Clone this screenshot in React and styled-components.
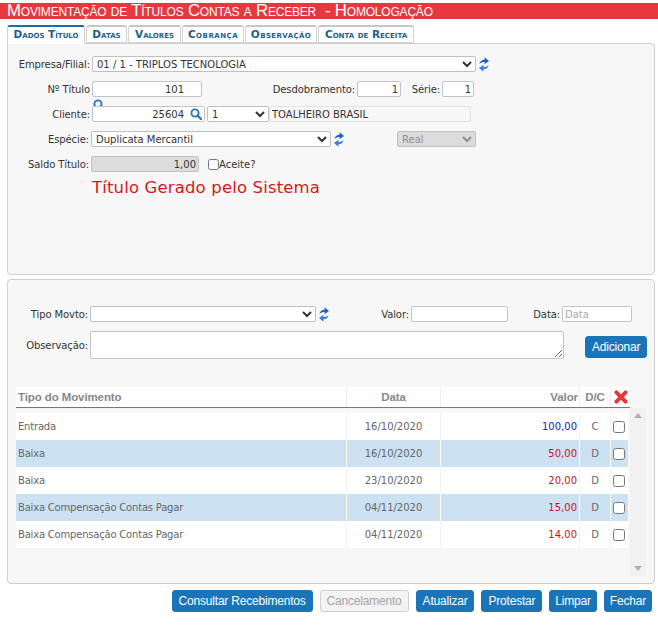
import React from "react"
import styled, { createGlobalStyle } from "styled-components"

const Global = createGlobalStyle`
  html, body {
    margin: 0;
    padding: 0;
    background: #fff;
  }
  body {
    width: 658px;
    height: 630px;
    overflow: hidden;
    font-family: "DejaVu Sans", Verdana, sans-serif;
    font-size: 10px;
    color: #333;
  }
`

const Page = styled.div`
  display: flex;
  flex-direction: column;
  padding-top: 3px;
`

const TitleBar = styled.div`
  height: 16px;
  background: #e8373f;
  color: #fff;
  font-family: "Liberation Sans", Arial, sans-serif;
  font-size: 16.8px;
  font-variant: small-caps;
  letter-spacing: -0.2px;
  line-height: 16px;
  padding-left: 7px;
  white-space: pre;
`

const Tabs = styled.div`
  display: flex;
  gap: 1px;
  margin: 6px 0 0 7px;
  height: 18px;
  position: relative;
  z-index: 1;
`

const Tab = styled.div`
  width: ${(p) => p.$w}px;
  height: ${(p) => (p.$active ? "19px" : "18px")};
  box-sizing: border-box;
  background: #fff;
  border: 1px solid #d4d4d4;
  border-top: 2px solid ${(p) => (p.$active ? "#1a6ea8" : "#c6c6c6")};
  border-bottom: ${(p) => (p.$active ? "none" : "1px solid #d4d4d4")};
  border-radius: 3px 3px 0 0;
  color: #1d5f8a;
  font-family: "DejaVu Sans", Verdana, sans-serif;
  font-size: 10.5px;
  font-weight: bold;
  font-variant: small-caps;
  letter-spacing: ${(p) => p.$ls || 0}px;
  line-height: 15px;
  text-align: center;
  white-space: nowrap;
`

const Panel = styled.div`
  margin: 0 3px 0 7px;
  box-sizing: border-box;
  height: ${(p) => p.$height}px;
  background: #f7f7f7;
  border: 1px solid #cfcfcf;
  border-radius: ${(p) => (p.$flat ? "0 4px 4px 4px" : "4px")};
  margin-top: ${(p) => p.$top || 0}px;
  padding-top: ${(p) => p.$pad}px;
  position: relative;
`

const Row = styled.div`
  display: flex;
  align-items: center;
  height: 16px;
  margin-bottom: ${(p) => p.$after}px;
`

const Label = styled.label`
  width: ${(p) => p.$w}px;
  flex: none;
  text-align: right;
  padding-right: 2px;
  box-sizing: border-box;
  white-space: nowrap;
  letter-spacing: -0.1px;
`

const Input = styled.input`
  width: ${(p) => p.$w}px;
  height: 16px;
  flex: none;
  box-sizing: border-box;
  margin: 0;
  padding: 0 ${(p) => p.$pr || 2}px 0 2px;
  border: 1px solid ${(p) => (p.$soft ? "#e3e3e3" : "#c4c4c4")};
  border-radius: 2px;
  background: ${(p) => (p.$bg ? p.$bg : "#fff")};
  color: #333;
  font: 10px "DejaVu Sans", Verdana, sans-serif;
  text-align: ${(p) => (p.$textLeft ? "left" : "right")};
  &::placeholder {
    color: #aaa;
  }
`

const Select = styled.select`
  width: ${(p) => p.$w}px;
  height: 16px;
  flex: none;
  box-sizing: border-box;
  margin: 0 0 0 ${(p) => p.$left || 0}px;
  padding: 0;
  border: 1px solid #c0c0c0;
  border-radius: 2px;
  background: ${(p) => (p.disabled ? "#dcdcdc" : "#fff")};
  color: ${(p) => (p.disabled ? "#8c8c8c" : "#333")};
  opacity: 1;
  font: 10px "DejaVu Sans", Verdana, sans-serif;
`

const SearchWrap = styled.span`
  position: relative;
  display: block;
  width: 113px;
  height: 16px;
  flex: none;
`

const InnerSearch = styled.svg`
  position: absolute;
  right: 3px;
  top: 2px;
  width: 12px;
  height: 12px;
`

const StraySearch = styled.svg`
  position: absolute;
  left: 1px;
  top: -7px;
  width: 12px;
  height: 7px;
`

const RefreshSvg = styled.svg`
  width: 10px;
  height: 15px;
  flex: none;
  margin-left: 3px;
`

const Refresh = () => (
  <RefreshSvg viewBox="0 0 10 15">
    <path d="M.4 7C.8 4.2 2.8 2.8 5.6 2.7V.3L10 3.9 5.6 7.3V5C3.6 5 1.8 5.6.4 7Z" fill="#1f5fc4" />
    <path d="M9.6 8C9.2 10.8 7.2 12.2 4.4 12.3V14.7L0 11.1 4.4 7.7V10C6.4 10 8.2 9.4 9.6 8Z" fill="#3a7fdc" />
  </RefreshSvg>
)

const CheckInline = styled.input`
  width: 11px;
  height: 11px;
  margin: 0 0 0 9px;
  flex: none;
`

const SystemMsg = styled.div`
  margin-left: 84px;
  color: #d81818;
  font-family: "DejaVu Sans", Verdana, sans-serif;
  font-size: 16.5px;
  line-height: 20px;
  letter-spacing: 0.15px;
`

const TextArea = styled.textarea`
  width: 474px;
  height: 28px;
  flex: none;
  box-sizing: border-box;
  margin: 0;
  border: 1px solid #c4c4c4;
  border-radius: 2px;
  background: #fff;
`

const ObsRow = styled.div`
  display: flex;
  align-items: center;
  height: 28px;
  margin-bottom: 28px;
`

const Button = styled.button`
  height: 22px;
  box-sizing: border-box;
  margin: 0;
  padding: 0 ${(p) => p.$px || 6}px;
  border: 1px solid ${(p) => (p.disabled ? "#cfcfcf" : "#1a75b8")};
  border-radius: 3px;
  background: ${(p) => (p.disabled ? "#f3f3f3" : "#1a75b8")};
  color: ${(p) => (p.disabled ? "#a5a5a5" : "#fff")};
  font-family: "Liberation Sans", Arial, sans-serif;
  font-size: 12px;
  letter-spacing: -0.2px;
  white-space: nowrap;
`

const AddButton = styled(Button)`
  margin: 4px 0 0 21px;
`

const TableWrap = styled.div`
  margin-left: 8px;
  width: 630px;
`

const HeadRow = styled.div`
  display: grid;
  grid-template-columns: 331px 94px 139px 31px 19px;
  height: 21px;
  background: #fff;
  border-bottom: 1px solid #777;
  box-sizing: border-box;
  width: 614px;
`

const HeadCell = styled.div`
  display: flex;
  align-items: center;
  justify-content: ${(p) => p.$align || "flex-start"};
  padding: 0 ${(p) => (p.$align === "flex-end" ? 1 : p.$align ? 0 : 2)}px;
  border-right: ${(p) => (p.$last ? "none" : "1px solid #eee")};
  color: #888;
  font-family: "Liberation Sans", Arial, sans-serif;
  font-size: 11.5px;
  font-weight: bold;
  letter-spacing: -0.1px;
  white-space: nowrap;
`

const TableBody = styled.div`
  display: flex;
  height: 168px;
`

const Rows = styled.div`
  width: 612px;
  padding-top: 5px;
  box-sizing: border-box;
`

const DataRow = styled.div`
  display: grid;
  grid-template-columns: 331px 94px 139px 31px 17px;
  height: 27px;
  background: ${(p) => (p.$alt ? "#cce2f3" : "#fff")};
`

const Cell = styled.div`
  display: flex;
  align-items: center;
  justify-content: ${(p) => p.$align || "flex-start"};
  padding: 0 ${(p) => (p.$align === "flex-end" ? 2 : p.$align ? 0 : 2)}px;
  border-right: ${(p) => (p.$last ? "none" : `1px solid ${p.$alt ? "#fff" : "#f2f2f2"}`)};
  color: ${(p) => p.$color || "#666"};
  letter-spacing: ${(p) => (p.$tight ? "-0.2px" : "0")};
  white-space: nowrap;
`

const RowCheck = styled.input`
  width: 12px;
  height: 12px;
  margin: 0 2px 0 0;
`

const Scrollbar = styled.div`
  width: 16px;
  margin-left: 2px;
  background: #f1f1f1;
  display: flex;
  flex-direction: column;
  justify-content: space-between;
  align-items: center;
  padding: 5px 0;
  box-sizing: border-box;
`

const Arrow = styled.div`
  width: 0;
  height: 0;
  border-left: 4px solid transparent;
  border-right: 4px solid transparent;
  border-${(p) => (p.$up ? "bottom" : "top")}: 5px solid #b0b0b0;
`

const Footer = styled.div`
  display: flex;
  justify-content: flex-end;
  gap: 7px;
  margin: 6px 6px 0 0;
`

const CloseIcon = styled.svg`
  width: 14px;
  height: 14px;
`

const Magnifier = () => (
  <>
    <circle cx="5" cy="5" r="3.6" fill="none" stroke="#2a7ab0" strokeWidth="1.9" />
    <path d="M7.6 7.6 11 11" stroke="#2a7ab0" strokeWidth="2.4" strokeLinecap="round" />
  </>
)

const movements = [
  { tipo: "Entrada", data: "16/10/2020", valor: "100,00", dc: "C", color: "#2020c0" },
  { tipo: "Baixa", data: "16/10/2020", valor: "50,00", dc: "D", color: "#d01020" },
  { tipo: "Baixa", data: "23/10/2020", valor: "20,00", dc: "D", color: "#d01020" },
  { tipo: "Baixa Compensação Contas Pagar", data: "04/11/2020", valor: "15,00", dc: "D", color: "#d01020" },
  { tipo: "Baixa Compensação Contas Pagar", data: "04/11/2020", valor: "14,00", dc: "D", color: "#d01020" },
]

const App = () => (
  <Page>
    <Global />
    <TitleBar>Movimentação de Títulos Contas a Receber  - Homologação</TitleBar>
    <Tabs>
      <Tab $active $w={78}>Dados Título</Tab>
      <Tab $w={41}>Datas</Tab>
      <Tab $w={53}>Valores</Tab>
      <Tab $w={62} $ls={0.5}>Cobrança</Tab>
      <Tab $w={72} $ls={0.4}>Observação</Tab>
      <Tab $w={96}>Conta de Receita</Tab>
    </Tabs>
    <Panel $height={232} $flat $pad={12}>
      <Row $after={9}>
        <Label $w={84}>Empresa/Filial:</Label>
        <Select $w={384} defaultValue="a">
          <option value="a">01 / 1 - TRIPLOS TECNOLOGIA</option>
        </Select>
        <Refresh />
      </Row>
      <Row $after={9}>
        <Label $w={84}>Nº Título</Label>
        <Input $w={110} $pr={17} defaultValue="101" />
        <Label $w={155}>Desdobramento:</Label>
        <Input $w={44} defaultValue="1" />
        <Label $w={41}>Série:</Label>
        <Input $w={32} defaultValue="1" />
      </Row>
      <Row $after={9}>
        <Label $w={84}>Cliente:</Label>
        <SearchWrap>
          <Input $w={113} $pr={20} defaultValue="25604" />
          <InnerSearch viewBox="0 0 12 12"><Magnifier /></InnerSearch>
          <StraySearch viewBox="0 0 12 7"><Magnifier /></StraySearch>
        </SearchWrap>
        <Select $w={62} $left={2} defaultValue="1">
          <option value="1">1</option>
        </Select>
        <Input $w={202} $soft $textLeft $bg="#f7f7f7" defaultValue="TOALHEIRO BRASIL" readOnly />
      </Row>
      <Row $after={9}>
        <Label $w={83}>Espécie:</Label>
        <Select $w={240} defaultValue="d">
          <option value="d">Duplicata Mercantil</option>
        </Select>
        <Refresh />
        <Select $w={79} $left={53} disabled defaultValue="r">
          <option value="r">Real</option>
        </Select>
      </Row>
      <Row $after={6}>
        <Label $w={83}>Saldo Título:</Label>
        <Input $w={108} $bg="#dcdcdc" defaultValue="1,00" readOnly />
        <CheckInline type="checkbox" />
        <span>Aceite?</span>
      </Row>
      <SystemMsg>Título Gerado pelo Sistema</SystemMsg>
    </Panel>
    <Panel $height={305} $top={4} $pad={26}>
      <Row $after={9}>
        <Label $w={82}>Tipo Movto:</Label>
        <Select $w={226} defaultValue="">
          <option value=""></option>
        </Select>
        <Refresh />
        <Label $w={82}>Valor:</Label>
        <Input $w={97} />
        <Label $w={54}>Data:</Label>
        <Input $w={70} $textLeft placeholder="Data" />
      </Row>
      <ObsRow>
        <Label $w={82}>Observação:</Label>
        <TextArea />
        <AddButton>Adicionar</AddButton>
      </ObsRow>
      <TableWrap>
        <HeadRow>
          <HeadCell>Tipo do Movimento</HeadCell>
          <HeadCell $align="center">Data</HeadCell>
          <HeadCell $align="flex-end">Valor</HeadCell>
          <HeadCell $align="center">D/C</HeadCell>
          <HeadCell $align="center" $last>
            <CloseIcon viewBox="0 0 14 14">
              <path d="M2.4 2.4 11.6 11.6M11.6 2.4 2.4 11.6" stroke="#e8373f" strokeWidth="4" strokeLinecap="round" />
            </CloseIcon>
          </HeadCell>
        </HeadRow>
        <TableBody>
          <Rows>
            {movements.map((m, i) => (
              <DataRow key={i} $alt={i % 2 === 1}>
                <Cell $alt={i % 2 === 1} $tight>{m.tipo}</Cell>
                <Cell $alt={i % 2 === 1} $align="center">{m.data}</Cell>
                <Cell $alt={i % 2 === 1} $align="flex-end" $color={m.color}>{m.valor}</Cell>
                <Cell $alt={i % 2 === 1} $align="center">{m.dc}</Cell>
                <Cell $alt={i % 2 === 1} $align="center" $last><RowCheck type="checkbox" /></Cell>
              </DataRow>
            ))}
          </Rows>
          <Scrollbar>
            <Arrow $up />
            <Arrow />
          </Scrollbar>
        </TableBody>
      </TableWrap>
    </Panel>
    <Footer>
      <Button>Consultar Recebimentos</Button>
      <Button disabled>Cancelamento</Button>
      <Button>Atualizar</Button>
      <Button>Protestar</Button>
      <Button $px={5}>Limpar</Button>
      <Button $px={5}>Fechar</Button>
    </Footer>
  </Page>
)

export default App
